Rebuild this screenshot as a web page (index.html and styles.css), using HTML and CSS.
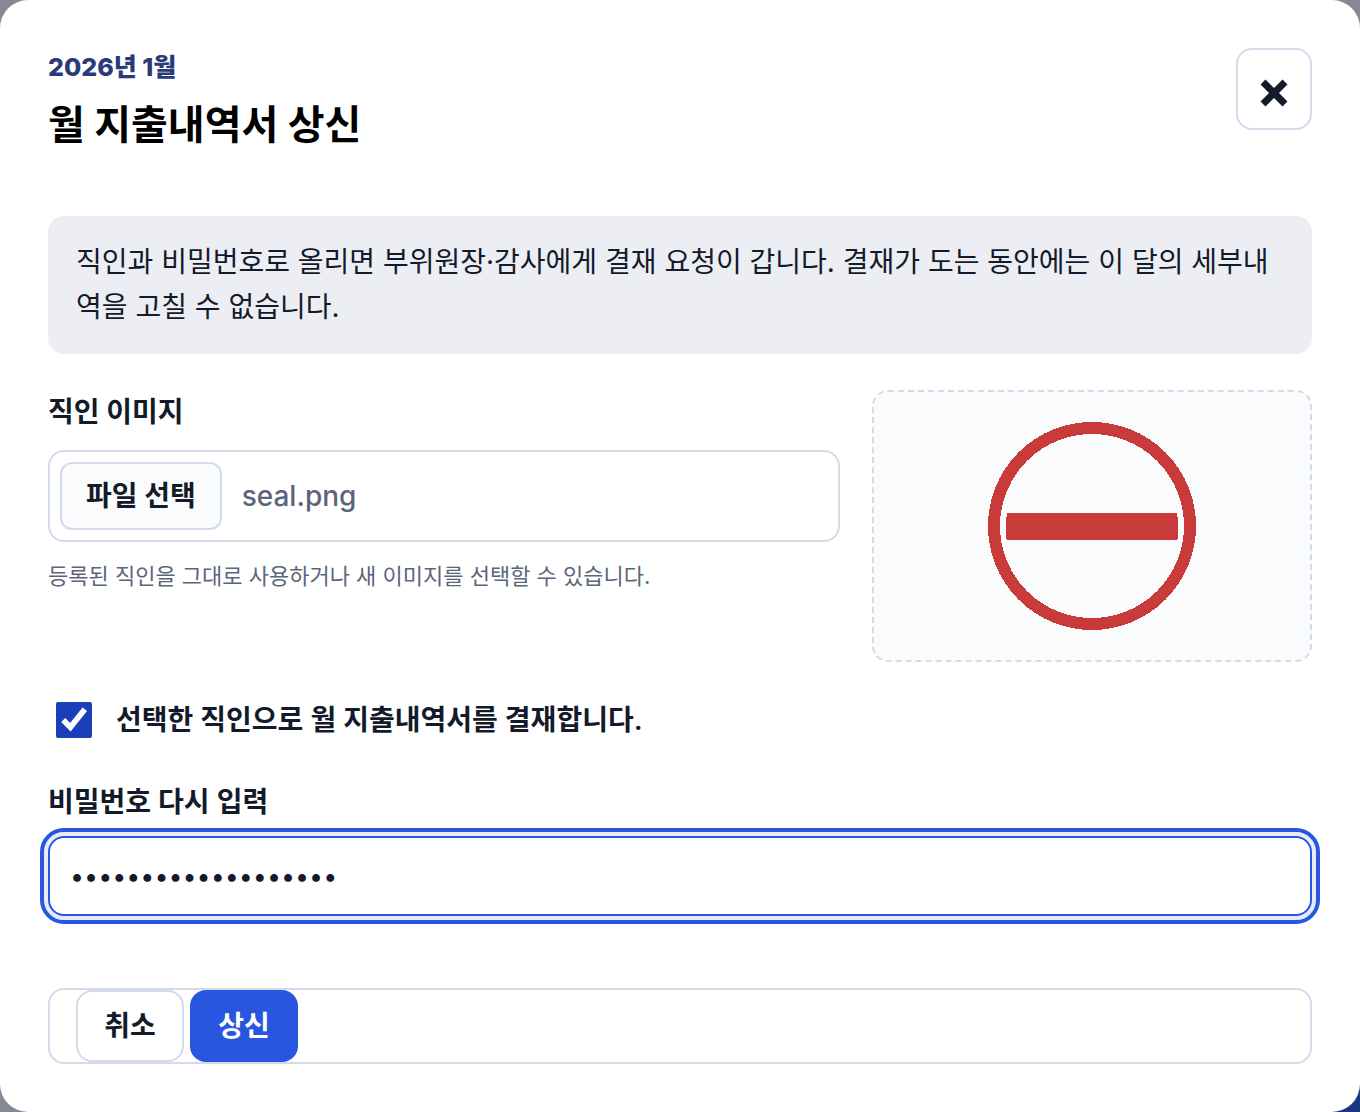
FILE: index.html
```
<!DOCTYPE html>
<html lang="ko">
<head>
    <meta charset="UTF-8">
    <meta name="viewport" content="width=device-width, initial-scale=1.0">
    <title>월 지출내역서 상신</title>
    <link rel="stylesheet" href="styles.css">
</head>
<body>
    <form class="dialog" role="dialog" aria-labelledby="dialog-title">
        <header class="dialog-header">
            <div>
                <p class="period">2026년 1월</p>
                <h2 id="dialog-title" class="title">월 지출내역서 상신</h2>
            </div>
            <button type="button" class="close" aria-label="닫기">
                <svg width="28" height="28" viewBox="0 0 28 28" aria-hidden="true">
                    <path d="M3 3L25 25M25 3L3 25" stroke="currentColor" stroke-width="7" />
                </svg>
            </button>
        </header>

        <p class="notice">직인과 비밀번호로 올리면 부위원장·감사에게 결재 요청이 갑니다. 결재가 도는 동안에는 이 달의 세부내역을 고칠 수 없습니다.</p>

        <div class="seal-row">
            <div class="seal-field">
                <label for="seal-file" class="label label-bold">직인 이미지</label>
                <div class="file-box">
                    <input type="file" id="seal-file" class="file-input" accept="image/*">
                    <button type="button" id="file-btn" class="file-button">파일 선택</button>
                    <span id="file-name" class="file-name">seal.png</span>
                </div>
                <p class="hint">등록된 직인을 그대로 사용하거나 새 이미지를 선택할 수 있습니다.</p>
            </div>
            <div class="preview">
                <svg class="seal" viewBox="0 0 208 208" role="img" aria-label="직인" shape-rendering="crispEdges">
                    <circle cx="104" cy="104" r="98" fill="none" stroke="#c93a3a" stroke-width="12" />
                    <path d="M19 91H189V95H190V117H189V118H19V117H18V95H19Z" fill="#c93a3a" />
                </svg>
            </div>
        </div>

        <label class="confirm">
            <input type="checkbox" class="checkbox" checked>
            <span>선택한 직인으로 월 지출내역서를 결재합니다.</span>
        </label>

        <div class="password-field">
            <label for="password" class="label">비밀번호 다시 입력</label>
            <input type="password" id="password" class="password" value="monthly-report-2026" autocomplete="off">
        </div>

        <footer class="actions">
            <button type="button" class="btn">취소</button>
            <button type="submit" class="btn btn-primary">상신</button>
        </footer>
    </form>

    <script>
        const fileInput = document.getElementById("seal-file");
        const fileName = document.getElementById("file-name");

        document.getElementById("file-btn").addEventListener("click", () => {
            fileInput.click();
        });

        fileInput.addEventListener("change", () => {
            if (fileInput.files.length) {
                fileName.textContent = fileInput.files[0].name;
            }
        });
    </script>
</body>
</html>
```
FILE: styles.css
```
* {
    box-sizing: border-box;
}

body {
    margin: 0;
    background: linear-gradient(135deg, #868994 90%, #1c3580 95%);
    color: #131a2a;
    font-family: Inter, "Noto Sans CJK KR", sans-serif;
    font-size: 28px;
    line-height: 44px;
}

p,
h2 {
    margin: 0;
}

button,
input {
    color: inherit;
    font: inherit;
}

button {
    cursor: pointer;
}

.dialog {
    min-height: 100vh;
    padding: 48px;
    background: #fff;
    border-radius: 28px;
}

.dialog-header {
    display: flex;
    align-items: flex-start;
    justify-content: space-between;
    margin-bottom: 60px;
}

.period {
    color: #2a3a78;
    font-size: 25px;
    font-weight: 800;
    line-height: 38px;
}

.title {
    margin-top: 8px;
    color: #000;
    font-size: 40px;
    font-weight: 700;
    line-height: 62px;
}

.close {
    display: flex;
    align-items: center;
    justify-content: center;
    width: 76px;
    height: 82px;
    padding: 8px 0 0;
    background: #fff;
    border: 2px solid #d3dbea;
    border-radius: 16px;
}

.notice {
    padding: 24px 28px;
    background: #edeef4;
    border-radius: 16px;
    line-height: 45px;
    word-break: break-all;
}

.seal-row {
    display: grid;
    grid-template-columns: minmax(0, 1fr) 440px;
    gap: 32px;
    margin-top: 36px;
}

.label {
    display: block;
    font-weight: 600;
}

.label-bold {
    margin-bottom: 16px;
    font-weight: 700;
}

.file-box {
    display: flex;
    align-items: center;
    gap: 20px;
    padding: 10px;
    border: 2px solid #d3dbea;
    border-radius: 16px;
}

.file-input {
    display: none;
}

.file-button {
    padding: 10px 24px;
    background: #fafbfd;
    border: 2px solid #d3dbea;
    border-radius: 12px;
    font-weight: 700;
}

.file-name {
    color: #5b657a;
    font-weight: 500;
}

.hint {
    margin-top: 12px;
    color: #5b657a;
    font-size: 22px;
}

.preview {
    display: flex;
    align-items: center;
    justify-content: center;
    height: 272px;
    background: #fafbfd;
    border: 2px dashed #d3dbea;
    border-radius: 16px;
}

.seal {
    width: 208px;
    height: 208px;
}

.confirm {
    display: flex;
    align-items: center;
    gap: 24px;
    margin-top: 36px;
    padding-left: 8px;
    font-weight: 600;
}

.checkbox {
    width: 36px;
    height: 36px;
    margin: 0;
    accent-color: #1a3fb8;
}

.password-field {
    margin-top: 38px;
}

.password {
    display: block;
    width: 100%;
    height: 80px;
    margin-top: 12px;
    padding: 0 20px;
    background: #fff;
    border: 2px solid #2956e0;
    border-radius: 16px;
    outline: 4px solid #2956e0;
    outline-offset: 4px;
    box-shadow: 0 0 0 4px #e9ecf7;
    font-size: 25px;
}

.actions {
    display: flex;
    gap: 6px;
    margin-top: 72px;
    padding: 0 26px;
    border: 2px solid #d3dbea;
    border-radius: 16px;
}

.btn {
    min-width: 108px;
    height: 72px;
    padding: 0 24px;
    background: #fff;
    border: 2px solid #d3dbea;
    border-radius: 16px;
    font-weight: 700;
}

.btn-primary {
    background: #2956e0;
    border-color: #2956e0;
    color: #fff;
}
```
